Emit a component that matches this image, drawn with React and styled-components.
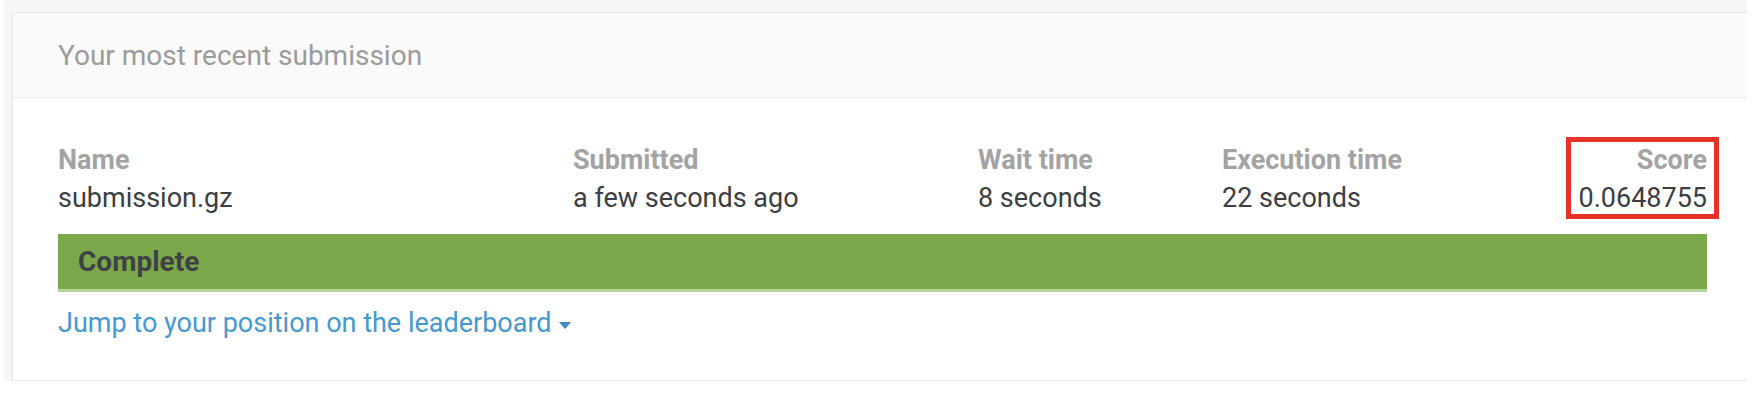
import styled, { createGlobalStyle } from "styled-components";

const GlobalStyle = createGlobalStyle`
  body {
    margin: 0;
    background: #ffffff;
    font-family: Roboto, "Liberation Sans", Arial, sans-serif;
  }
`;

const Frame = styled.div`
  margin-left: 4px;
  width: 1743px;
  box-sizing: border-box;
  padding: 12px 0 0 8px;
  background: #f5f6f8;
`;

const Card = styled.div`
  background: #ffffff;
  border: 1px solid #e6e6e6;
  border-right: none;
  border-radius: 4px 0 0 0;
  overflow: hidden;
`;

const Header = styled.div`
  height: 85px;
  box-sizing: border-box;
  padding: 0 45px;
  display: flex;
  align-items: center;
  background: #fafafa;
  border-bottom: 1px solid #ececec;
`;

const Title = styled.h2`
  margin: 0;
  font-size: 28px;
  font-weight: 400;
  color: #9b9b9b;
`;

const Body = styled.div`
  padding: 43px 40px 38px 45px;
`;

const Stats = styled.div`
  display: grid;
  grid-template-columns: 515px 405px 244px 1fr auto;
`;

const Stat = styled.div`
  position: relative;
  display: flex;
  flex-direction: column;
  align-items: ${(p) => (p.$right ? "flex-end" : "flex-start")};
  font-size: 27px;
  line-height: 38px;

  ${(p) =>
    p.$marked &&
    `
    &::after {
      content: "";
      position: absolute;
      top: -4px;
      bottom: -2px;
      left: -12px;
      right: -12px;
      border: 5px solid #e6332a;
    }
  `}
`;

const Label = styled.span`
  font-weight: 700;
  color: #a3a3a3;
`;

const Value = styled.span`
  color: #3b3e42;
`;

const StatusBar = styled.div`
  margin-top: 17px;
  height: 55px;
  display: flex;
  align-items: center;
  padding-left: 20px;
  background: #7aa84a;
  border-bottom: 3px solid #b6d39c;
  font-size: 28px;
  font-weight: 700;
  color: #3f4245;
`;

const JumpLink = styled.a`
  display: inline-flex;
  align-items: center;
  gap: 7px;
  margin-top: 12px;
  font-size: 27px;
  line-height: 38px;
  color: #4598d1;
  text-decoration: none;
  cursor: pointer;
`;

const Caret = styled.span`
  width: 0;
  height: 0;
  border-left: 6px solid transparent;
  border-right: 6px solid transparent;
  border-top: 7px solid #3d8bc4;
  margin-top: 4px;
`;

const stats = [
  { label: "Name", value: "submission.gz" },
  { label: "Submitted", value: "a few seconds ago" },
  { label: "Wait time", value: "8 seconds" },
  { label: "Execution time", value: "22 seconds" },
  { label: "Score", value: "0.0648755", right: true, marked: true },
];

const App = () => {
  return (
    <>
      <GlobalStyle />
      <Frame>
        <Card>
          <Header>
            <Title>Your most recent submission</Title>
          </Header>
          <Body>
            <Stats>
              {stats.map((s) => (
                <Stat key={s.label} $right={s.right} $marked={s.marked}>
                  <Label>{s.label}</Label>
                  <Value>{s.value}</Value>
                </Stat>
              ))}
            </Stats>
            <StatusBar>Complete</StatusBar>
            <JumpLink>
              Jump to your position on the leaderboard
              <Caret />
            </JumpLink>
          </Body>
        </Card>
      </Frame>
    </>
  );
};

export default App;
